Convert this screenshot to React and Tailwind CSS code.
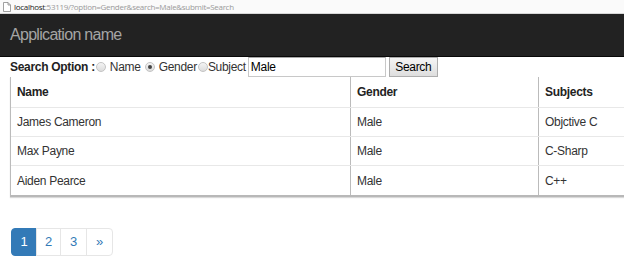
import React, { useState } from 'react';

const ROWS = [
  { name: 'James Cameron', gender: 'Male', subject: 'Objctive C' },
  { name: 'Max Payne', gender: 'Male', subject: 'C-Sharp' },
  { name: 'Aiden Pearce', gender: 'Male', subject: 'C++' },
];

const Radio = ({ checked }) => (
  <span className="inline-flex items-center justify-center w-[10px] h-[10px] rounded-full border border-[#c4c4c4] bg-gradient-to-b from-[#f4f4f4] to-[#dcdcdc]">
    {checked && <span className="w-[4px] h-[4px] rounded-full bg-[#444]" />}
  </span>
);

const App = () => {
  const [option] = useState('Gender');

  return (
    <div className="w-[624px] h-[273px] overflow-hidden bg-white font-['Liberation_Sans',Arial,sans-serif] text-[#333]">
      {/* Address bar */}
      <div className="h-[14px] flex items-center pl-[3px] border-b border-[#d8d8d8] bg-[#fafafa] text-[8px] tracking-[-0.3px] font-['Open_Sans',sans-serif] leading-none">
        <svg width="8" height="10" viewBox="0 0 8 10" className="mr-[3px]">
          <path d="M0.5 0.5h4.5l2.5 2.5v6.5h-7z M5 0.5v2.5h2.5" fill="white" stroke="#888" strokeWidth="0.8" />
        </svg>
        <span className="text-[#222]">localhost</span>
        <span className="text-[#999]">:53119/?option=Gender&amp;search=Male&amp;submit=Search</span>
      </div>

      {/* Navbar */}
      <div className="h-[43px] bg-[#222] border-b border-[#080808] flex items-center px-[10px]">
        <span className="text-[#a5a5a5] text-[16px] tracking-[-0.7px] leading-none">Application name</span>
      </div>

      {/* Search row */}
      <div className="h-[20px] flex items-center pl-[10px] text-[12px] tracking-[-0.3px] leading-none">
        <span className="font-bold text-[#222] mr-[1px]">Search Option :</span>
        <Radio checked={option === 'Name'} />
        <span className="ml-[4px] mr-[4px]">Name</span>
        <Radio checked={option === 'Gender'} />
        <span className="ml-[4px] mr-[1px]">Gender</span>
        <Radio checked={option === 'Subject'} />
        <span className="mr-[2px]">Subject</span>
        <div className="w-[138px] h-[20px] border border-[#c8c8c8] border-t-[#a8a8a8] flex items-center px-[2px] text-[#000]">
          Male
        </div>
        <button className="ml-[3px] w-[49px] h-[20px] border border-[#adadad] bg-gradient-to-b from-[#f5f5f5] to-[#dedede] text-[12px] text-[#000]">
          Search
        </button>
      </div>

      {/* Table */}
      <div className="pl-[10px]">
        <div className="w-[700px] border-l border-[#bbb] border-b-2 border-b-[#b8b8b8] shadow-[0_1px_1px_rgba(0,0,0,0.15)] text-[12px] tracking-[-0.3px]">
          <div className="flex h-[31px] items-center border-b border-[#e8e8e8] font-bold text-[#222]">
            <div className="w-[339px] pl-[6px]">Name</div>
            <div className="w-[188px] h-full flex items-center border-l border-[#bbb] pl-[6px]">Gender</div>
            <div className="flex-1 h-full flex items-center border-l border-[#bbb] pl-[6px]">Subjects</div>
          </div>
          {ROWS.map((row, i) => (
            <div
              key={row.name}
              className={`flex h-[29px] items-center text-[#333] ${i < ROWS.length - 1 ? 'border-b border-[#e8e8e8]' : ''}`}
            >
              <div className="w-[339px] pl-[6px]">{row.name}</div>
              <div className="w-[188px] h-full flex items-center border-l border-[#bbb] pl-[6px]">{row.gender}</div>
              <div className="flex-1 h-full flex items-center border-l border-[#bbb] pl-[6px]">{row.subject}</div>
            </div>
          ))}
        </div>
      </div>

      {/* Pagination */}
      <div className="flex pl-[11px] mt-[31px] text-[13px]">
        <a className="w-[26px] h-[28px] flex items-center justify-center bg-[#337ab7] border border-[#337ab7] text-white rounded-l-[4px]">1</a>
        <a className="w-[25px] h-[28px] flex items-center justify-center border border-[#e6e6e6] -ml-px text-[#337ab7]">2</a>
        <a className="w-[27px] h-[28px] flex items-center justify-center border border-[#e6e6e6] -ml-px text-[#337ab7]">3</a>
        <a className="w-[27px] h-[28px] flex items-center justify-center border border-[#e6e6e6] -ml-px text-[#337ab7] rounded-r-[4px]">»</a>
      </div>
    </div>
  );
};

export default App;
